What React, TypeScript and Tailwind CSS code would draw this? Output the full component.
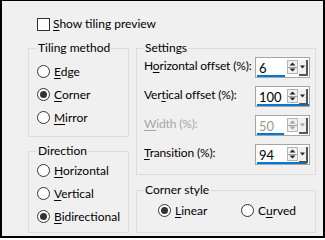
import React from 'react'

const font = { fontFamily: 'Lato, "Liberation Sans", sans-serif' }

const Radio = ({ checked, label, u }: { checked?: boolean; label: string; u: number }) => (
    <div className="flex h-[23px] items-center gap-[4px]">
        <div className="flex h-[13px] w-[13px] items-center justify-center rounded-full border border-[#333] bg-white">
            {checked && <div className="h-[7px] w-[7px] rounded-full bg-[#333]"></div>}
        </div>
        <span className="whitespace-nowrap leading-[16px]">
            {label.slice(0, u)}
            <u className="underline-offset-[2px]">{label[u]}</u>
            {label.slice(u + 1)}
        </span>
    </div>
)

const SpinBox = ({ value, bar, disabled }: { value: string; bar: number; disabled?: boolean }) => (
    <div className="relative h-[21px] w-[55px] shrink-0 border border-[#a6a6a6] bg-white">
        <span className={`absolute left-[3px] top-[2px] leading-[16px] text-[13px] ${disabled ? 'text-[#9a9a8a]' : 'text-black'}`}>
            {value}
        </span>
        <div className="absolute left-[1px] top-[17px] h-[2px] bg-[#0078d7]" style={{ width: bar }}></div>
        <div className="absolute left-[31px] top-[2px] flex h-[14px] w-[11px] flex-col items-center justify-between border border-[#b4b4b4] bg-[#f0f0f0] py-[1px]">
            <svg width="7" height="4" viewBox="0 0 7 4">
                <path d="M0.5 3.5 L3.5 0.5 L6.5 3.5 Z" fill={disabled ? '#a0a0a0' : '#222'} />
            </svg>
            <div className="h-px w-full bg-[#a0a0a0]"></div>
            <svg width="7" height="4" viewBox="0 0 7 4">
                <path d="M0.5 0.5 L3.5 3.5 L6.5 0.5 Z" fill={disabled ? '#a0a0a0' : '#222'} />
            </svg>
        </div>
        <div className="absolute left-[43px] top-[2px] flex h-[16px] w-[9px] items-center justify-center border-b-2 border-r-2 border-b-[#555] border-r-[#555] bg-[#f0f0f0]">
            <svg width="7" height="4" viewBox="0 0 7 4">
                <path d="M1 0.5 L3.5 3.5 L6 0.5 Z" fill={disabled ? '#a0a0a0' : '#222'} />
            </svg>
        </div>
    </div>
)

const Row = ({ pre, u, post, value, bar, disabled }: { pre: string; u: string; post: string; value: string; bar: number; disabled?: boolean }) => (
    <div className="flex h-[29px] items-start justify-between">
        <span className={`mt-[1px] whitespace-nowrap leading-[16px] tracking-[-0.15px] ${disabled ? 'text-[#a6a6a6]' : ''}`}>
            {pre}
            <u className="underline-offset-[2px]">{u}</u>
            {post}
        </span>
        <SpinBox value={value} bar={bar} disabled={disabled} />
    </div>
)

export default function App() {
    return (
        <div className="h-[240px] w-[325px] bg-white text-[12px] text-black" style={font}>
            <div className="h-[238px] border-b-2 border-l-2 border-r-2 border-t border-black bg-[#f0f0f0]">
                <div className="flex items-center gap-[3px] pl-[35px] pt-[15px]">
                    <div className="h-[13px] w-[13px] border border-[#333] bg-white"></div>
                    <span className="whitespace-nowrap leading-[16px]">
                        <u className="underline-offset-[2px]">S</u>how tiling preview
                    </span>
                </div>

                <div className="ml-[26px] mt-[8px] flex gap-[7px]">
                    <div className="flex w-[101px] flex-col gap-[6px]">
                        <fieldset className="h-[97px] border border-[#dcdcdc] pl-[8px]">
                            <legend className="whitespace-nowrap px-[1px] leading-[16px]">Tiling method</legend>
                            <div className="pt-[4px]">
                                <Radio label="Edge" u={0} />
                                <Radio label="Corner" u={0} checked />
                                <Radio label="Mirror" u={0} />
                            </div>
                        </fieldset>
                        <fieldset className="h-[90px] border border-[#dcdcdc] pl-[8px]">
                            <legend className="whitespace-nowrap px-[1px] leading-[16px]">Direction</legend>
                            <Radio label="Horizontal" u={0} />
                            <Radio label="Vertical" u={0} />
                            <Radio label="Bidirectional" u={0} checked />
                        </fieldset>
                    </div>

                    <div className="flex w-[180px] flex-col gap-[7px]">
                        <fieldset className="h-[135px] border border-[#dcdcdc] pl-[7px] pr-[5px]">
                            <legend className="whitespace-nowrap px-[1px] leading-[16px]">Settings</legend>
                            <div className="pt-[1px]">
                                <Row pre="H" u="o" post="rizontal offset (%):" value="6" bar={28} />
                                <Row pre="Ver" u="t" post="ical offset (%):" value="100" bar={52} />
                                <Row pre="" u="W" post="idth (%):" value="50" bar={27} disabled />
                                <Row pre="" u="T" post="ransition (%):" value="94" bar={50} />
                            </div>
                        </fieldset>
                        <fieldset className="h-[51px] border border-[#dcdcdc] pl-[7px]">
                            <legend className="whitespace-nowrap px-[1px] leading-[16px]">Corner style</legend>
                            <div className="flex pl-[14px] pt-[1px]">
                                <div className="w-[83px]">
                                    <Radio label="Linear" u={0} checked />
                                </div>
                                <Radio label="Curved" u={1} />
                            </div>
                        </fieldset>
                    </div>
                </div>
            </div>
        </div>
    )
}
